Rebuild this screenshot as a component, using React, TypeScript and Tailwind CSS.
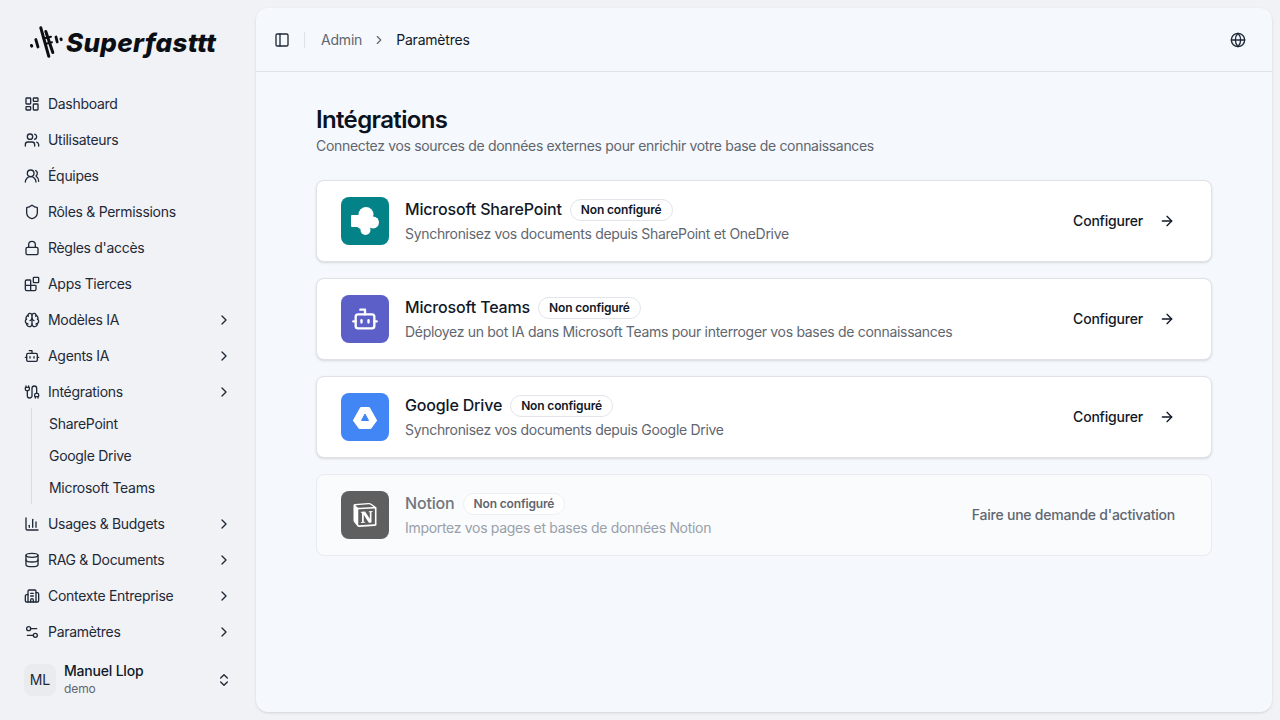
import React from 'react'
import {
  LayoutDashboard,
  Users,
  UsersRound,
  Shield,
  Lock,
  Blocks,
  Brain,
  Bot,
  Cable,
  ChartColumn,
  Database,
  Building2,
  Settings2,
  ChevronRight,
  ChevronsUpDown,
  PanelLeft,
  Globe,
  ArrowRight,
} from 'lucide-react'
import { SiNotion } from 'react-icons/si'

const navTop = [
  { name: 'Dashboard', icon: LayoutDashboard },
  { name: 'Utilisateurs', icon: Users },
  { name: 'Équipes', icon: UsersRound },
  { name: 'Rôles & Permissions', icon: Shield },
  { name: "Règles d'accès", icon: Lock },
  { name: 'Apps Tierces', icon: Blocks },
  { name: 'Modèles IA', icon: Brain, more: true },
  { name: 'Agents IA', icon: Bot, more: true },
  { name: 'Intégrations', icon: Cable, more: true },
]

const navBottom = [
  { name: 'Usages & Budgets', icon: ChartColumn },
  { name: 'RAG & Documents', icon: Database },
  { name: 'Contexte Entreprise', icon: Building2 },
  { name: 'Paramètres', icon: Settings2 },
]

function NavRow({ name, icon: Icon, more }: { name: string; icon: React.ElementType; more?: boolean }) {
  return (
    <div className="flex h-9 items-center gap-2 pl-6 pr-6 text-sm tracking-[-0.3px] text-[#1f2937]">
      <Icon className="h-4 w-4 shrink-0" strokeWidth={2} />
      <span>{name}</span>
      {more && <ChevronRight className="ml-auto h-4 w-4" />}
    </div>
  )
}

function Logo() {
  return (
    <div className="flex h-[86px] items-center pl-[30px]">
      <svg width="36" height="36" viewBox="0 0 36 36" fill="none" stroke="#0b0f14" strokeLinecap="round" className="shrink-0">
        <path d="M1.500 20.500l.2.600" strokeWidth="3" />
        <path d="M5.800 14.500l2.200 7.500" strokeWidth="2.800" />
        <path d="M10.800 2.800l8 28.500" strokeWidth="3" />
        <path d="M15.800 6.500l7 21" strokeWidth="3" />
        <path d="M13.500 13.500l7.500-1.800M15 19l7-1.700" strokeWidth="2" />
        <path d="M26 12l1.200 5" strokeWidth="2.800" />
        <path d="M31 14l.2.600" strokeWidth="3" />
      </svg>
      <span className="text-[26px] font-extrabold italic leading-none tracking-[0.3px] text-[#0b0f14]">Superfasttt</span>
    </div>
  )
}

const cards = [
  {
    name: 'Microsoft SharePoint',
    desc: 'Synchronisez vos documents depuis SharePoint et OneDrive',
    bg: 'bg-[#038387]',
    icon: (
      <svg viewBox="0 0 28 28" className="h-7 w-7" fill="#fff">
        <circle cx="15" cy="7.500" r="7.500" />
        <circle cx="22" cy="15.500" r="6" />
        <circle cx="14.500" cy="23" r="5" />
        <circle cx="13" cy="14.500" r="8.500" />
        <rect x="0" y="8" width="13" height="12" rx="1" />
      </svg>
    ),
  },
  {
    name: 'Microsoft Teams',
    desc: 'Déployez un bot IA dans Microsoft Teams pour interroger vos bases de connaissances',
    bg: 'bg-[#5b5fc7]',
    icon: <Bot className="h-7 w-7 text-white" strokeWidth={2} />,
  },
  {
    name: 'Google Drive',
    desc: 'Synchronisez vos documents depuis Google Drive',
    bg: 'bg-[#4285f4]',
    icon: (
      <svg viewBox="0 0 24 24" className="h-6 w-6">
        <path d="M8 3h8l7 12.500L17.500 23h-11L1 15.500z" fill="#fff" stroke="#fff" strokeWidth="2" strokeLinejoin="round" />
        <path d="M12 9l-3.500 6.500h7z" fill="#4285f4" stroke="#4285f4" strokeWidth="1" strokeLinejoin="round" />
      </svg>
    ),
  },
]

function Badge({ muted }: { muted?: boolean }) {
  return (
    <span className={`mt-[2px] rounded-full border bg-white px-[10px] py-[2px] text-xs font-semibold tracking-[-0.15px] ${muted ? 'border-[#edf0f3] text-[#5f6670]' : 'border-[#e2e5ea] text-[#111827]'}`}>
      Non configuré
    </span>
  )
}

export default function App() {
  return (
    <div className="flex h-[720px] w-[1280px] overflow-hidden bg-[#f0f2f6] font-['Inter',sans-serif]">
      <aside className="flex w-[256px] shrink-0 flex-col">
        <Logo />
        <nav className="flex flex-col">
          {navTop.map((item) => (
            <NavRow key={item.name} {...item} />
          ))}
          <div className="my-[-2px] ml-[31px] flex flex-col border-l border-[#d9dce1] pl-[17px] text-sm tracking-[-0.3px] text-[#1f2937]">
            <div className="flex h-8 items-center">SharePoint</div>
            <div className="flex h-8 items-center">Google Drive</div>
            <div className="flex h-8 items-center">Microsoft Teams</div>
          </div>
          <div className="h-[4px]" />
          {navBottom.map((item) => (
            <NavRow key={item.name} {...item} more />
          ))}
        </nav>
        <div className="mt-3 flex items-center gap-2 pl-6 pr-6">
          <div className="flex h-8 w-8 items-center justify-center rounded-lg bg-[#e9ebef] text-sm text-[#1f2937]">ML</div>
          <div className="flex flex-col">
            <span className="text-sm font-medium leading-[18px] tracking-[-0.2px] text-[#111827]">Manuel Llop</span>
            <span className="text-xs leading-[18px] tracking-[-0.1px] text-[#5f6670]">demo</span>
          </div>
          <ChevronsUpDown className="ml-auto h-4 w-4 text-[#1f2937]" />
        </div>
      </aside>

      <main className="my-2 mr-2 flex flex-1 flex-col rounded-xl bg-[#f5f8fc] shadow-sm">
        <header className="flex h-16 items-center border-b border-[#dfe3e8] pl-[18px] pr-[26px] text-sm tracking-[-0.2px]">
          <PanelLeft className="h-4 w-4 text-[#1f2937]" />
          <div className="ml-[14px] mr-4 h-4 w-px bg-[#dfe3e8]" />
          <span className="text-[#5f6670]">Admin</span>
          <ChevronRight className="mx-[10px] h-[14px] w-[14px] text-[#5f6670]" />
          <span className="text-[#111827]">Paramètres</span>
          <Globe className="ml-auto h-4 w-4 text-[#1f2937]" />
        </header>

        <div className="px-[60px] pt-8">
          <h1 className="text-2xl font-semibold leading-8 tracking-[-0.65px] text-[#0b1220]">Intégrations</h1>
          <p className="text-sm leading-5 tracking-[-0.32px] text-[#5f6670]">Connectez vos sources de données externes pour enrichir votre base de connaissances</p>

          <div className="mt-6 flex flex-col gap-4">
            {cards.map((card) => (
              <div key={card.name} className="flex h-[82px] items-center rounded-lg border border-[#dfe3e8] bg-white pl-6 pr-9 shadow-sm">
                <div className={`flex h-12 w-12 items-center justify-center rounded-lg ${card.bg}`}>{card.icon}</div>
                <div className="mb-[2px] ml-4 flex flex-col gap-[3px]">
                  <div className="flex items-center gap-2">
                    <span className="text-base font-medium tracking-[-0.17px] text-[#111827]">{card.name}</span>
                    <Badge />
                  </div>
                  <p className="text-sm leading-5 tracking-[-0.31px] text-[#5f6670]">{card.desc}</p>
                </div>
                <div className="ml-auto flex items-center gap-4 text-sm font-medium tracking-[-0.2px] text-[#111827]">
                  Configurer
                  <ArrowRight className="h-4 w-4" />
                </div>
              </div>
            ))}
            <div className="flex h-[82px] items-center rounded-lg border border-[#e8ebef] bg-[#f9fbfd] pl-6 pr-9">
              <div className="flex h-12 w-12 items-center justify-center rounded-lg bg-[#5f5f5f]">
                <SiNotion className="h-6 w-6 text-white" />
              </div>
              <div className="mb-[2px] ml-4 flex flex-col gap-[3px]">
                <div className="flex items-center gap-2">
                  <span className="text-base font-medium tracking-[-0.17px] text-[#70767e]">Notion</span>
                  <Badge muted />
                </div>
                <p className="text-sm leading-5 tracking-[-0.31px] text-[#9aa0a8]">Importez vos pages et bases de données Notion</p>
              </div>
              <span className="ml-auto text-sm font-medium tracking-[-0.23px] text-[#5f6670]">Faire une demande d'activation</span>
            </div>
          </div>
        </div>
      </main>
    </div>
  )
}
